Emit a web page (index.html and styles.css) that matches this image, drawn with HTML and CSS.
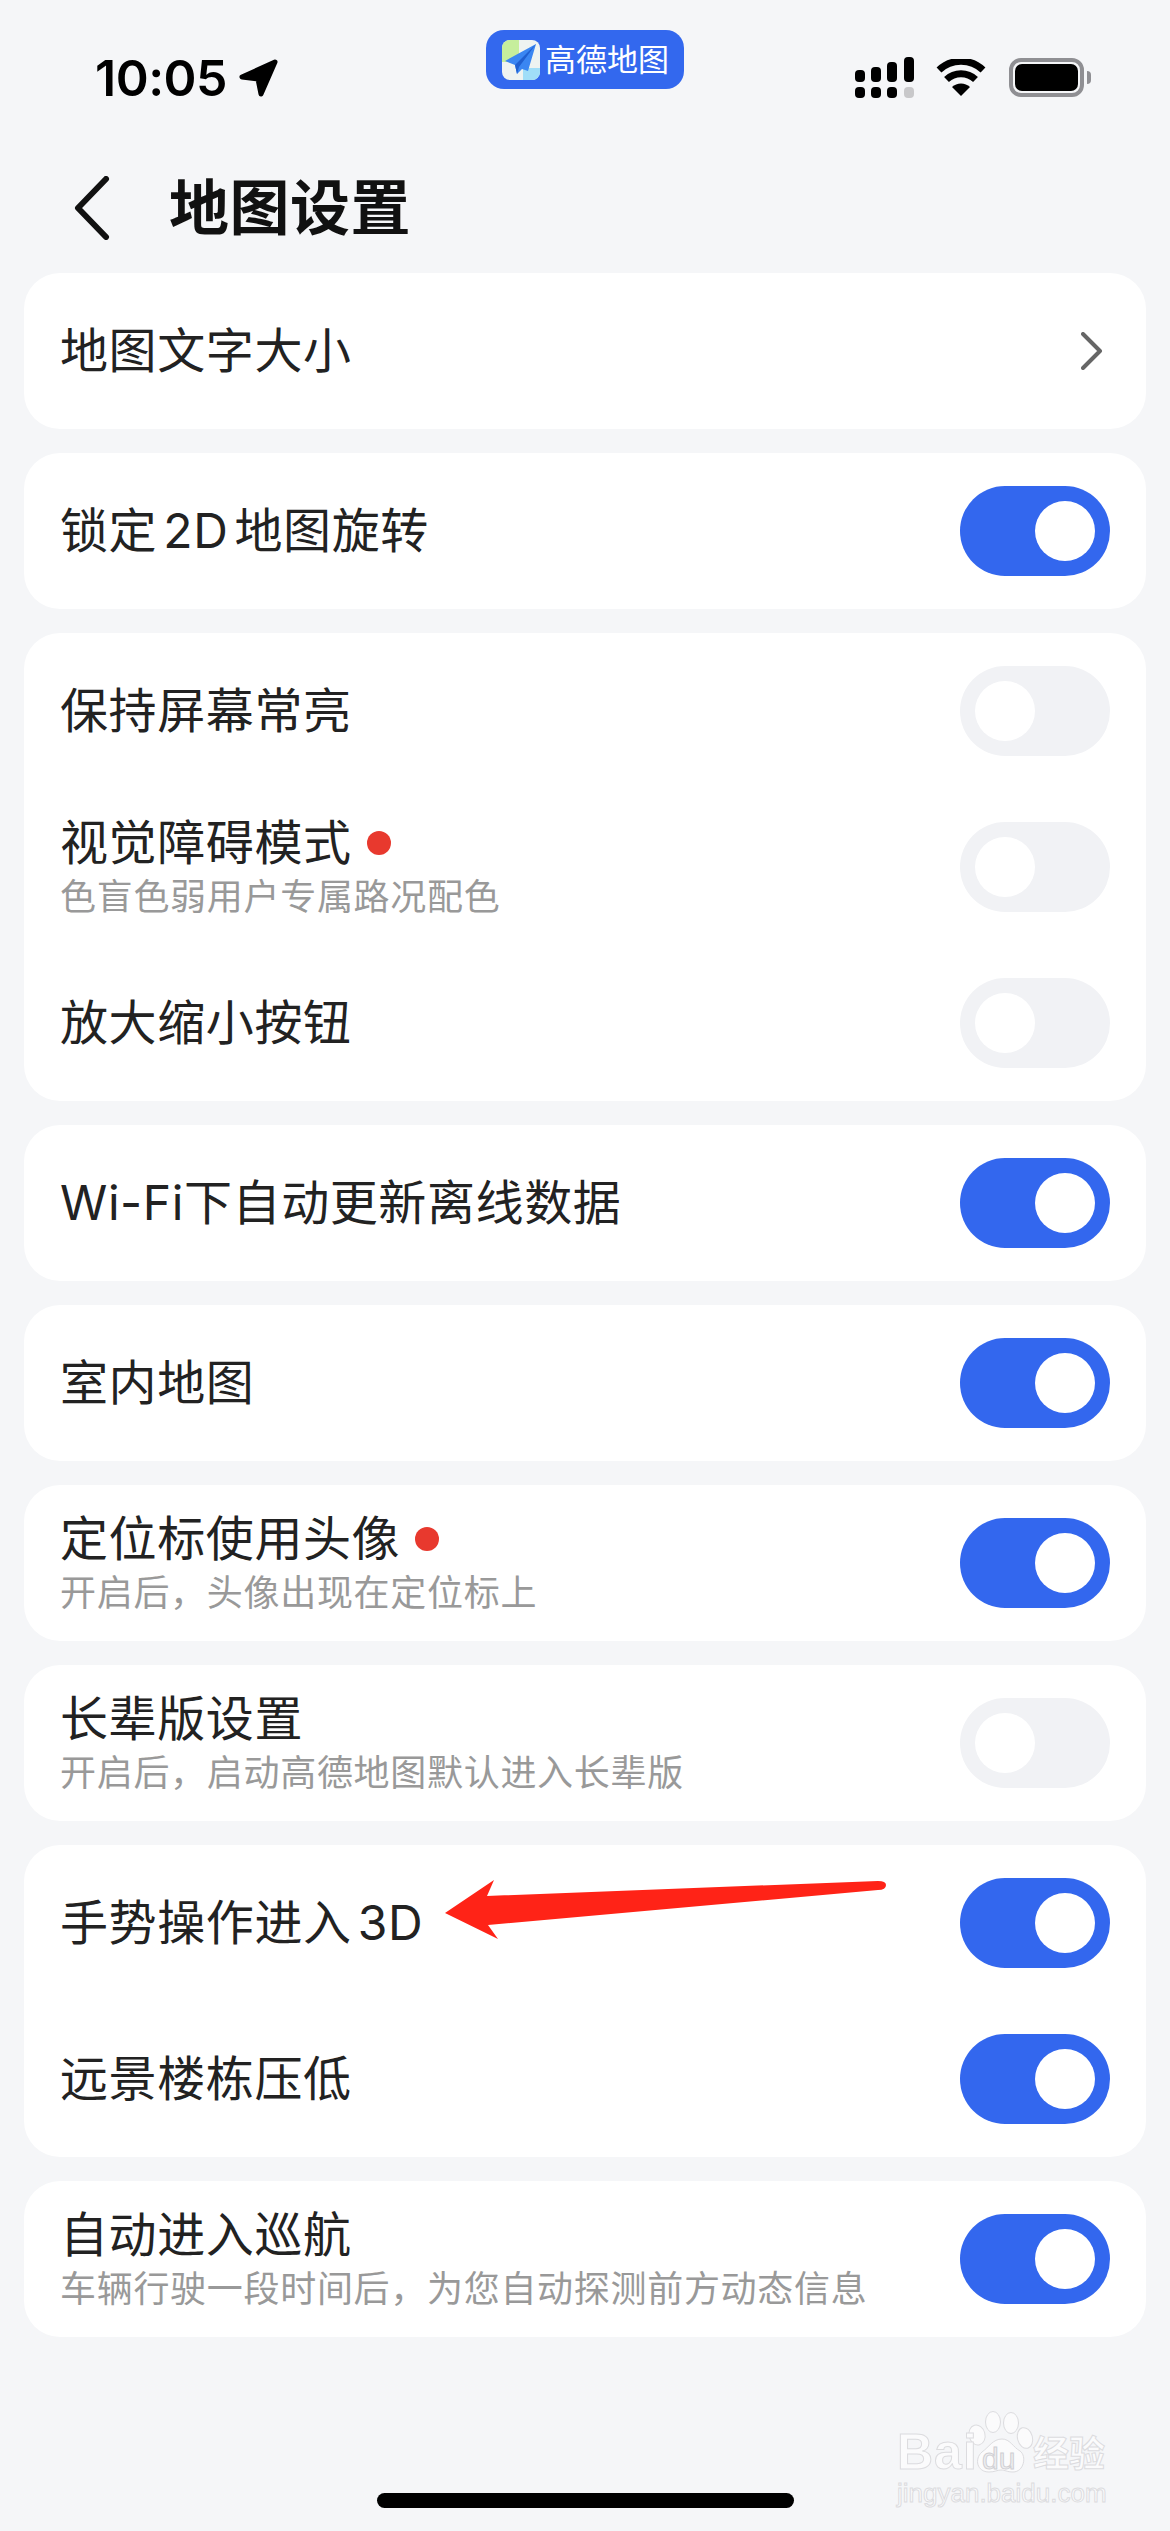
FILE: index.html
```html
<!DOCTYPE html>
<html lang="zh-CN">
<head>
<meta charset="utf-8">
<title>地图设置</title>
<link rel="stylesheet" href="styles.css">
</head>
<body>
<div class="page">
  <header class="status">
    <div class="status-left">
      <span class="time">10:05</span>
      <svg class="loc" viewBox="0 0 39 38"><path d="M36 3 L3 18 L19 20 L22 35 Z" fill="#000" stroke="#000" stroke-width="5" stroke-linejoin="round"/></svg>
    </div>
    <div class="pill">
      <svg class="pill-logo" viewBox="0 0 38 40">
        <defs><clipPath id="lc"><rect width="38" height="40" rx="8"/></clipPath></defs>
        <g clip-path="url(#lc)">
          <rect width="38" height="40" fill="#eef3f1"/>
          <rect width="17" height="22" fill="#c6ee9c"/>
          <rect x="21" y="28" width="17" height="12" fill="#a0def8"/>
          <path d="M34 4 L3 21 L13 25 L15 34 L20 29 L26 31 Z" fill="#3a86f2"/>
          <path d="M34 4 L13 25 L15 34 L17 27 Z" fill="#1f5fd0"/>
        </g>
      </svg>
      <span class="pill-text">高德地图</span>
    </div>
    <div class="status-right">
      <svg class="signal" viewBox="0 0 59 41">
        <rect x="0" y="13" width="10" height="12" rx="4"/>
        <rect x="16" y="10" width="10" height="15" rx="4"/>
        <rect x="32" y="5" width="10" height="20" rx="4"/>
        <rect x="49" y="0" width="10" height="25" rx="4"/>
        <rect x="0" y="30" width="10" height="11" rx="4"/>
        <rect x="16" y="30" width="10" height="11" rx="4"/>
        <rect x="32" y="30" width="10" height="11" rx="4"/>
        <rect class="signal-off" x="49" y="30" width="10" height="11" rx="4"/>
      </svg>
      <svg class="wifi" viewBox="0 0 50 37">
        <path d="M25 37 L16 28 A13 13 0 0 1 34 28 Z"/>
        <path class="wifi-arc" d="M10.5 20.5 A21 21 0 0 1 39.5 20.5"/>
        <path class="wifi-arc" d="M3 11 A32 32 0 0 1 47 11"/>
      </svg>
      <div class="battery"><div class="battery-level"></div></div>
      <div class="battery-nub"></div>
    </div>
  </header>

  <nav class="nav">
    <svg class="back" viewBox="0 0 36 64"><path d="M32 3 L4 32 L32 61" fill="none" stroke="#111" stroke-width="6" stroke-linecap="round" stroke-linejoin="round"/></svg>
    <h1 class="title">地图设置</h1>
  </nav>

  <main class="list">
    <section class="card">
      <div class="row"><div class="label"><div class="name">地图文字大小</div></div>
        <svg class="chev" viewBox="0 0 22 38"><path d="M2 2 L19 19 L2 36" fill="none" stroke="#666" stroke-width="4" stroke-linecap="round" stroke-linejoin="round"/></svg>
      </div>
    </section>
    <section class="card">
      <div class="row"><div class="label"><div class="name">锁定 2D 地图旋转</div></div><div class="toggle on"></div></div>
    </section>
    <section class="card">
      <div class="row"><div class="label"><div class="name">保持屏幕常亮</div></div><div class="toggle"></div></div>
      <div class="row"><div class="label two"><div class="name">视觉障碍模式<i class="dot"></i></div><div class="sub">色盲色弱用户专属路况配色</div></div><div class="toggle"></div></div>
      <div class="row"><div class="label"><div class="name">放大缩小按钮</div></div><div class="toggle"></div></div>
    </section>
    <section class="card">
      <div class="row"><div class="label"><div class="name">Wi-Fi下自动更新离线数据</div></div><div class="toggle on"></div></div>
    </section>
    <section class="card">
      <div class="row"><div class="label"><div class="name">室内地图</div></div><div class="toggle on"></div></div>
    </section>
    <section class="card">
      <div class="row"><div class="label two"><div class="name">定位标使用头像<i class="dot"></i></div><div class="sub">开启后，头像出现在定位标上</div></div><div class="toggle on"></div></div>
    </section>
    <section class="card">
      <div class="row"><div class="label two"><div class="name">长辈版设置</div><div class="sub">开启后，启动高德地图默认进入长辈版</div></div><div class="toggle"></div></div>
    </section>
    <section class="card">
      <div class="row"><div class="label"><div class="name">手势操作进入 3D</div></div><div class="toggle on"></div></div>
      <div class="row"><div class="label"><div class="name">远景楼栋压低</div></div><div class="toggle on"></div></div>
    </section>
    <section class="card">
      <div class="row"><div class="label two"><div class="name">自动进入巡航</div><div class="sub">车辆行驶一段时间后，为您自动探测前方动态信息</div></div><div class="toggle on"></div></div>
    </section>
  </main>

  <svg class="annot" viewBox="0 0 450 64"><path d="M5 38 L54 5 L47 21 L438 6 Q446 6 446 10 Q446 15 438 15 L48 50 L58 64 Z" fill="#ff2317"/></svg>

  <div class="mark">
    <svg class="paw" viewBox="0 0 70 62">
      <g fill="#fbfbfc" stroke="#dcdcdf" stroke-width="1">
        <ellipse cx="10" cy="24" rx="8" ry="10" transform="rotate(-15 10 24)"/>
        <ellipse cx="26" cy="11" rx="7.500" ry="10.500"/>
        <ellipse cx="44" cy="12" rx="7.500" ry="10.500"/>
        <ellipse cx="58" cy="27" rx="7.500" ry="10.500" transform="rotate(-15 58 27)"/>
        <path d="M35 28 C43 28 46 36 53 40 C60 45 57 61 46 61 C40 61 38 59 34 59 C30 59 28 61 22 61 C10 61 7 48 15 41 C22 36 26 28 35 28 Z"/>
      </g>
    </svg>
    <span class="mark-bai">Bai</span>
    <span class="mark-du">du</span>
    <span class="mark-cn">经验</span>
    <span class="mark-url">jingyan.baidu.com</span>
  </div>

  <div class="home"></div>
</div>
</body>
</html>
```

FILE: styles.css
```css
* { box-sizing: border-box; }
html, body { margin: 0; padding: 0; }
body { background: #f5f6f8; font-family: Inter, "Noto Sans CJK SC", sans-serif; color: #222; }
.page { position: relative; width: 1170px; height: 2531px; overflow: hidden; }

.status { position: relative; display: flex; justify-content: space-between; height: 118px; padding: 0 79px 0 95px; }
.status-left { display: flex; align-items: center; gap: 12px; height: 60px; margin-top: 48px; }
.time { font-size: 50px; line-height: 60px; font-weight: 600; color: #000; letter-spacing: -0.5px; }
.loc { width: 39px; height: 38px; }

.pill { position: absolute; left: 486px; top: 30px; width: 198px; height: 59px; border-radius: 18px; background: #3368ee; display: flex; align-items: center; padding-left: 16px; gap: 5px; }
.pill-logo { width: 38px; height: 40px; flex: none; }
.pill-text { font-size: 31px; line-height: 40px; color: #fff; font-weight: 400; white-space: nowrap; }

.status-right { display: flex; align-items: flex-start; margin-top: 57px; }
.signal { width: 59px; height: 41px; fill: #000; }
.signal-off { fill: #c8c8ca; }
.wifi { width: 50px; height: 37px; margin: 2px 23px 0 22px; fill: #000; }
.wifi-arc { fill: none; stroke: #000; stroke-width: 7; }
.battery { width: 75px; height: 39px; margin-top: 1px; border: 4px solid #8f8f93; border-radius: 12px; padding: 2px; }
.battery-level { width: 100%; height: 100%; background: #000; border-radius: 7px; }
.battery-nub { width: 4px; height: 13px; margin: 14px 0 0 3px; background: #8f8f93; border-radius: 0 4px 4px 0; }

.nav { display: flex; align-items: center; height: 155px; padding: 25px 0 0 74px; }
.back { width: 36px; height: 64px; flex: none; }
.title { margin: 0 0 0 59px; font-size: 60px; line-height: 70px; font-weight: 700; color: #111; letter-spacing: 0.5px; }

.list { display: flex; flex-direction: column; gap: 24px; padding: 0 24px; }
.card { background: #fff; border-radius: 36px; }
.row { display: flex; align-items: center; justify-content: space-between; height: 156px; padding: 0 36px 0 36px; }
.label.two { padding-top: 6px; }
.name { display: flex; align-items: center; font-size: 48px; line-height: 54px; color: #222; white-space: pre; letter-spacing: 0.6px; word-spacing: -8px; }
.sub { font-size: 36px; line-height: 54px; color: #999; white-space: nowrap; letter-spacing: 0.7px; }
.dot { width: 24px; height: 24px; margin-left: 15px; border-radius: 50%; background: #e8392e; }

.toggle { position: relative; flex: none; width: 150px; height: 90px; border-radius: 45px; background: #f1f2f5; }
.toggle::after { content: ""; position: absolute; left: 15px; top: 15px; width: 60px; height: 60px; border-radius: 50%; background: #fff; }
.toggle.on { background: #3367ee; }
.toggle.on::after { left: 75px; }

.chev { width: 22px; height: 38px; margin-right: 7px; }

.annot { position: absolute; left: 440px; top: 1875px; width: 450px; height: 64px; }

.mark { position: absolute; left: 890px; top: 2400px; width: 230px; height: 115px; font-family: "Liberation Sans", sans-serif; color: #fbfbfc; }
.paw { position: absolute; left: 77px; top: 11px; width: 70px; height: 62px; }
.mark-bai { position: absolute; left: 7px; top: 27px; font-size: 50px; line-height: 50px; font-weight: 700; -webkit-text-stroke: 1px #dcdcdf; letter-spacing: 1px; }
.mark-du { position: absolute; left: 92px; top: 44px; font-size: 30px; line-height: 30px; color: #eeeef0; -webkit-text-stroke: 1px #cfcfd3; }
.mark-cn { position: absolute; left: 143px; top: 30px; font-family: "Noto Sans CJK SC", sans-serif; font-size: 36px; line-height: 42px; font-weight: 700; -webkit-text-stroke: 1px #dcdcdf; }
.mark-url { position: absolute; left: 7px; top: 76px; font-size: 26px; line-height: 34px; -webkit-text-stroke: 1px #dcdcdf; white-space: nowrap; }

.home { position: absolute; left: 377px; top: 2493px; width: 417px; height: 15px; border-radius: 8px; background: #000; }
```
